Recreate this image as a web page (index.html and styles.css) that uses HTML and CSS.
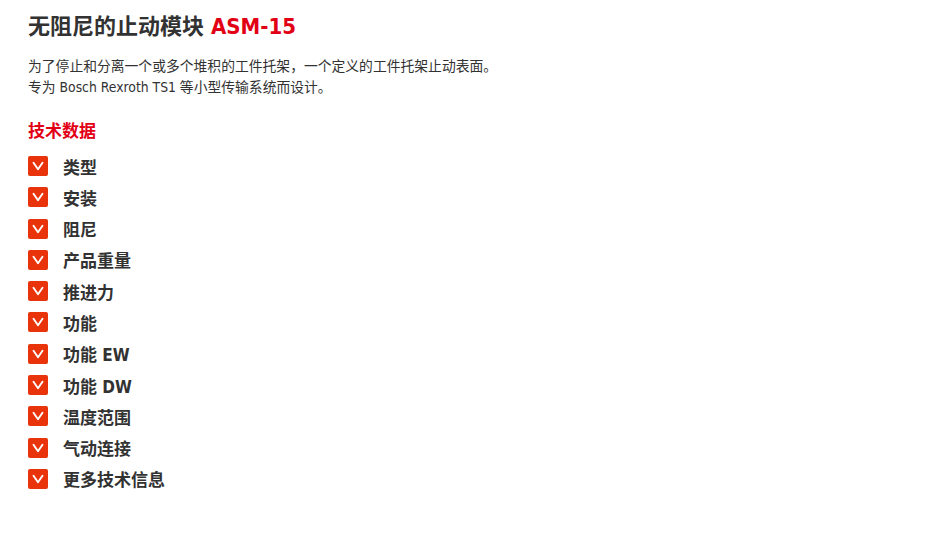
FILE: index.html
```html
<!DOCTYPE html>
<html lang="zh-CN">
<head>
<meta charset="utf-8">
<link rel="stylesheet" href="styles.css">
</head>
<body>
<main class="page">
  <h1 class="title">无阻尼的止动模块 <span class="accent">ASM-15</span></h1>
  <p class="desc">为了停止和分离一个或多个堆积的工件托架，一个定义的工件托架止动表面。<br>专为 Bosch Rexroth TS1 等小型传输系统而设计。</p>
  <h2 class="section">技术数据</h2>
  <ul class="specs">
    <li class="spec"><span class="chev"><svg viewBox="0 0 20 20"><path d="M5.5 6.8 L10 13.3 L14.5 6.8" /></svg></span>类型</li>
    <li class="spec"><span class="chev"><svg viewBox="0 0 20 20"><path d="M5.5 6.8 L10 13.3 L14.5 6.8" /></svg></span>安装</li>
    <li class="spec"><span class="chev"><svg viewBox="0 0 20 20"><path d="M5.5 6.8 L10 13.3 L14.5 6.8" /></svg></span>阻尼</li>
    <li class="spec"><span class="chev"><svg viewBox="0 0 20 20"><path d="M5.5 6.8 L10 13.3 L14.5 6.8" /></svg></span>产品重量</li>
    <li class="spec"><span class="chev"><svg viewBox="0 0 20 20"><path d="M5.5 6.8 L10 13.3 L14.5 6.8" /></svg></span>推进力</li>
    <li class="spec"><span class="chev"><svg viewBox="0 0 20 20"><path d="M5.5 6.8 L10 13.3 L14.5 6.8" /></svg></span>功能</li>
    <li class="spec"><span class="chev"><svg viewBox="0 0 20 20"><path d="M5.5 6.8 L10 13.3 L14.5 6.8" /></svg></span>功能 EW</li>
    <li class="spec"><span class="chev"><svg viewBox="0 0 20 20"><path d="M5.5 6.8 L10 13.3 L14.5 6.8" /></svg></span>功能 DW</li>
    <li class="spec"><span class="chev"><svg viewBox="0 0 20 20"><path d="M5.5 6.8 L10 13.3 L14.5 6.8" /></svg></span>温度范围</li>
    <li class="spec"><span class="chev"><svg viewBox="0 0 20 20"><path d="M5.5 6.8 L10 13.3 L14.5 6.8" /></svg></span>气动连接</li>
    <li class="spec"><span class="chev"><svg viewBox="0 0 20 20"><path d="M5.5 6.8 L10 13.3 L14.5 6.8" /></svg></span>更多技术信息</li>
  </ul>
</main>
</body>
</html>
```
FILE: styles.css
```css
html, body {
  margin: 0;
  padding: 0;
  background: #ffffff;
}
body {
  font-family: "DejaVu Sans Condensed", "Noto Sans CJK SC", sans-serif;
  color: #323232;
}
.page {
  padding: 12px 28px 0 28px;
}
.title {
  margin: 0;
  font-size: 22px;
  line-height: 30px;
  font-weight: 700;
  color: #323232;
}
.accent {
  color: #e20015;
}
.desc {
  margin: 14px 0 0 0;
  font-size: 13.8px;
  line-height: 21px;
}
.section {
  margin: 21px 0 0 0;
  font-size: 17px;
  line-height: 24px;
  font-weight: 700;
  color: #e20015;
}
.specs {
  list-style: none;
  margin: 13px 0 0 0;
  padding: 0;
  display: flex;
  flex-direction: column;
  gap: 11.3px;
}
.spec {
  display: flex;
  align-items: center;
  gap: 15px;
  height: 20px;
  font-size: 17px;
  font-weight: 700;
  color: #323232;
}
.chev {
  flex: none;
  width: 20px;
  height: 20px;
  border-radius: 2px;
  background: #e8330b;
  display: flex;
}
.chev svg {
  width: 20px;
  height: 20px;
  fill: none;
  stroke: #ffffff;
  stroke-width: 1.9;
  stroke-linecap: round;
  stroke-linejoin: round;
}
```
